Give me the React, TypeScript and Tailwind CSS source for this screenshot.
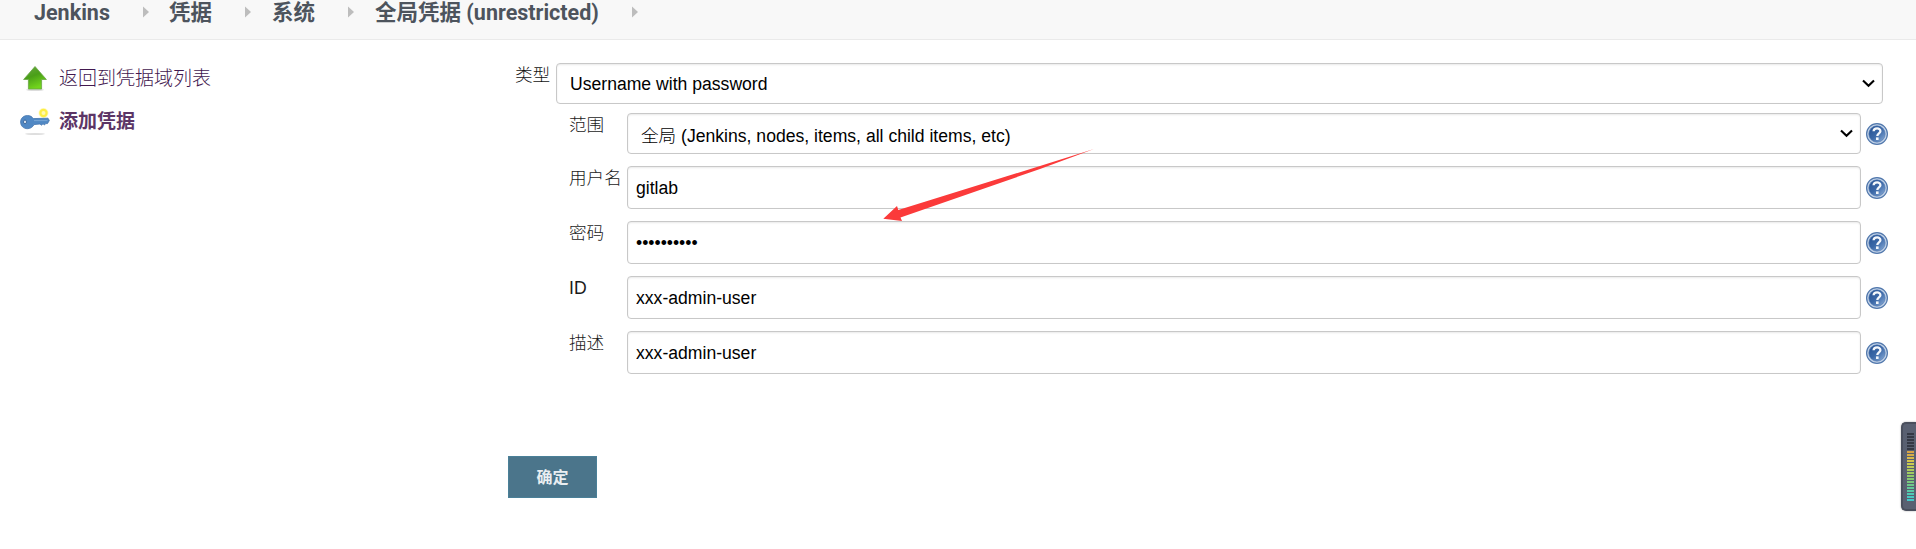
import React from 'react';

const LATIN = "font-['Liberation_Sans','Noto_Sans_CJK_SC',sans-serif]";

function Separator() {
  return (
    <svg className="h-[12px] w-[6px] shrink-0" viewBox="0 0 6 12">
      <path d="M0 0.5 L6 6 L0 11.5 Z" fill="#bdbdbd" />
    </svg>
  );
}

function HelpIcon() {
  return (
    <svg className="mt-[1px] h-[22px] w-[22px] shrink-0" viewBox="0 0 22 22">
      <defs>
        <linearGradient id="help" x1="0" y1="0" x2="1" y2="1">
          <stop offset="0" stopColor="#234f91" />
          <stop offset="0.5" stopColor="#3c69a8" />
          <stop offset="1" stopColor="#8fb0da" />
        </linearGradient>
      </defs>
      <circle cx="11" cy="11" r="10.4" fill="#c3d3e8" stroke="#5077ac" strokeWidth="1.2" />
      <circle cx="11" cy="11" r="8.2" fill="url(#help)" stroke="#4d76ae" strokeWidth="0.6" />
      <path
        d="M7.6 8.2 C7.8 4.6 14.5 4.4 14.4 8.2 C14.3 10.4 11.4 10.4 11.3 13"
        fill="none"
        stroke="#f4f7fb"
        strokeWidth="2.3"
      />
      <rect x="10" y="14.4" width="2.6" height="2.6" fill="#f4f7fb" />
    </svg>
  );
}

function Chevron() {
  return (
    <svg
      className="pointer-events-none absolute right-[8px] top-[16px] h-[9px] w-[13px]"
      viewBox="0 0 13 9"
    >
      <path d="M1 1.5 L6.5 6.8 L12 1.5" fill="none" stroke="#000" strokeWidth="2.1" />
    </svg>
  );
}

function Select({ text, className }: { text: string; className: string }) {
  return (
    <div className="relative h-[41px] min-w-0 flex-1">
      <select
        className={`h-full w-full appearance-none rounded-[4px] border border-[#c8c8c8] bg-white pl-[13px] text-[17.6px] text-black shadow-[inset_0_1px_2px_rgba(0,0,0,0.09)] ${className}`}
      >
        <option>{text}</option>
      </select>
      <Chevron />
    </div>
  );
}

function Row({ label, children }: { label: string; children: React.ReactNode }) {
  return (
    <div className="flex">
      <div className="w-[58px] shrink-0 whitespace-nowrap text-[17.6px] leading-[24px]">{label}</div>
      <div className="flex min-w-0 flex-1 items-center gap-[5px]">
        {children}
        <HelpIcon />
      </div>
    </div>
  );
}

function TextField({ value, type = 'text' }: { value: string; type?: string }) {
  return (
    <input
      type={type}
      defaultValue={value}
      className="h-[43px] min-w-0 flex-1 rounded-[4px] border border-[#c8c8c8] bg-white px-[8px] pt-[2px] text-[17.6px] text-black shadow-[inset_0_1px_2px_rgba(0,0,0,0.09)]"
    />
  );
}

function UpArrowIcon() {
  return (
    <svg className="h-[27px] w-[26px]" viewBox="0 0 26 27">
      <defs>
        <linearGradient id="up" x1="0" y1="0" x2="0.4" y2="1">
          <stop offset="0" stopColor="#6aa843" />
          <stop offset="0.5" stopColor="#4a9f18" />
          <stop offset="1" stopColor="#72d51c" />
        </linearGradient>
      </defs>
      <ellipse cx="13" cy="24.8" rx="9" ry="1.3" fill="#dcdcdc" />
      <path
        d="M13 1.5 L24.4 14.5 H19.6 V24 H6.4 V14.5 H1.6 Z"
        fill="url(#up)"
        stroke="#6aa548"
        strokeWidth="0.8"
      />
    </svg>
  );
}

function KeyIcon() {
  return (
    <svg className="h-[29px] w-[30px]" viewBox="0 0 30 29">
      <ellipse cx="15" cy="27" rx="10" ry="0.9" fill="#dedede" />
      <circle cx="23.5" cy="6" r="5" fill="#fffac4" />
      <circle cx="23.5" cy="6" r="3.1" fill="#fff9b0" stroke="#fdee45" strokeWidth="2.2" />
      <path
        d="M7.5 8.5 C10.5 8.5 12 9.8 13.2 11.6 L28 11.2 L29.3 13.5 L27.5 16.6 H25.5 L24.5 18 L23 16.8 L21.5 18.2 L20 17 L14 17.6 C12.8 20 10.5 21.7 7.5 21.7 C3.5 21.7 0.6 18.9 0.6 15.1 C0.6 11.3 3.5 8.5 7.5 8.5 Z"
        fill="#5088c4"
        stroke="#4475ad"
        strokeWidth="0.8"
      />
      <path d="M14 13.6 H27.5" stroke="#78a5d4" strokeWidth="1" />
      <ellipse cx="5" cy="14.9" rx="1.5" ry="1.9" fill="#e4ebf3" stroke="#345f94" strokeWidth="0.9" />
    </svg>
  );
}

const METER = [
  '#353945', '#353945', '#353945', '#353945', '#353945', '#353945',
  '#d8a345', '#d8ad47', '#d8b94a', '#d3c44c', '#c9cb50', '#bccb55',
  '#aecb5b', '#a1cb62', '#93ca69', '#87c972', '#7bc97e', '#6fc98b',
  '#63c999', '#58c9a7', '#4fc9b4', '#48c9c0', '#44c8c9',
];

function SideMeter() {
  return (
    <div className="absolute right-0 top-[422px] flex h-[89px] w-[15px] flex-col gap-[1px] rounded-l-[5px] border-2 border-r-0 border-[#4a4f5d] bg-[#596071] pl-[4px] pt-[9px] shadow-[0_0_2px_rgba(0,0,0,0.35)]">
      {METER.map((c, i) => (
        <div key={i} className="h-[2px] w-[7px] shrink-0" style={{ backgroundColor: c }} />
      ))}
    </div>
  );
}

export default function App() {
  return (
    <div className={`relative h-[549px] w-full overflow-hidden bg-white text-[#222] ${LATIN}`}>
      <header className="flex h-[40px] items-start border-b border-[#eaeaea] bg-[#f8f8f8] pl-[34px] font-['Roboto','Noto_Sans_CJK_SC',sans-serif] text-[21.5px] font-bold text-[#4d545d]">
        <nav className="flex h-[24px] items-center whitespace-nowrap leading-[24px]">
          <span className="w-[109px] pt-[2px]">Jenkins</span>
          <Separator />
          <span className="ml-[20px] w-[76px] pt-[2px]">凭据</span>
          <Separator />
          <span className="ml-[21px] w-[76px] pt-[2px]">系统</span>
          <Separator />
          <span className="ml-[21px] w-[257px] pt-[2px]">全局凭据 (unrestricted)</span>
          <Separator />
        </nav>
      </header>

      <main className="flex">
        <aside className="w-[508px] shrink-0 pl-[20px] pt-[25px] text-[19px] text-[#5c3566]">
          <a className="flex h-[27px] items-center gap-[11px] pl-[2px] font-light text-[#42184f]">
            <UpArrowIcon />
            <span className="pt-[1px]">返回到凭据域列表</span>
          </a>
          <a className="mt-[15px] flex h-[29px] items-center gap-[9px] font-bold">
            <KeyIcon />
            <span className="pt-[1px]">添加凭据</span>
          </a>
        </aside>

        <form className="w-[1380px] pt-[23px]">
          <div className="flex pl-[7px]">
            <div className="w-[41px] shrink-0 text-[17.6px] font-light leading-[24px] text-[#111]">类型</div>
            <Select text="Username with password" className="pt-[2px]" />
            <div className="w-[5px]" />
          </div>
          <div className="mt-[9px] flex flex-col gap-[12px] pl-[61px] font-light text-[#1a1a1a]">
            <Row label="范围">
              <Select text="全局 (Jenkins, nodes, items, all child items, etc)" className="pt-[6px]" />
            </Row>
            <Row label="用户名">
              <TextField value="gitlab" />
            </Row>
            <Row label="密码">
              <TextField value="password12" type="password" />
            </Row>
            <Row label="ID">
              <TextField value="xxx-admin-user" />
            </Row>
            <Row label="描述">
              <TextField value="xxx-admin-user" />
            </Row>
          </div>
          <button
            type="button"
            className="mt-[82px] h-[42px] w-[89px] border border-[#4a8098] bg-[#4b758b] pt-[2px] text-[16px] font-bold text-[#e9eef1]"
          >
            确定
          </button>
        </form>
      </main>

      <svg
        className="pointer-events-none absolute left-[880px] top-[145px] h-[80px] w-[220px]"
        viewBox="880 145 220 80"
      >
        <path d="M883.3 218.8 L897 206 L898.3 210 L1040 166 L1094 149 L1040 169 L900.5 217.5 L902 221 Z" fill="#fb3a3a" />
      </svg>
      <SideMeter />
    </div>
  );
}
